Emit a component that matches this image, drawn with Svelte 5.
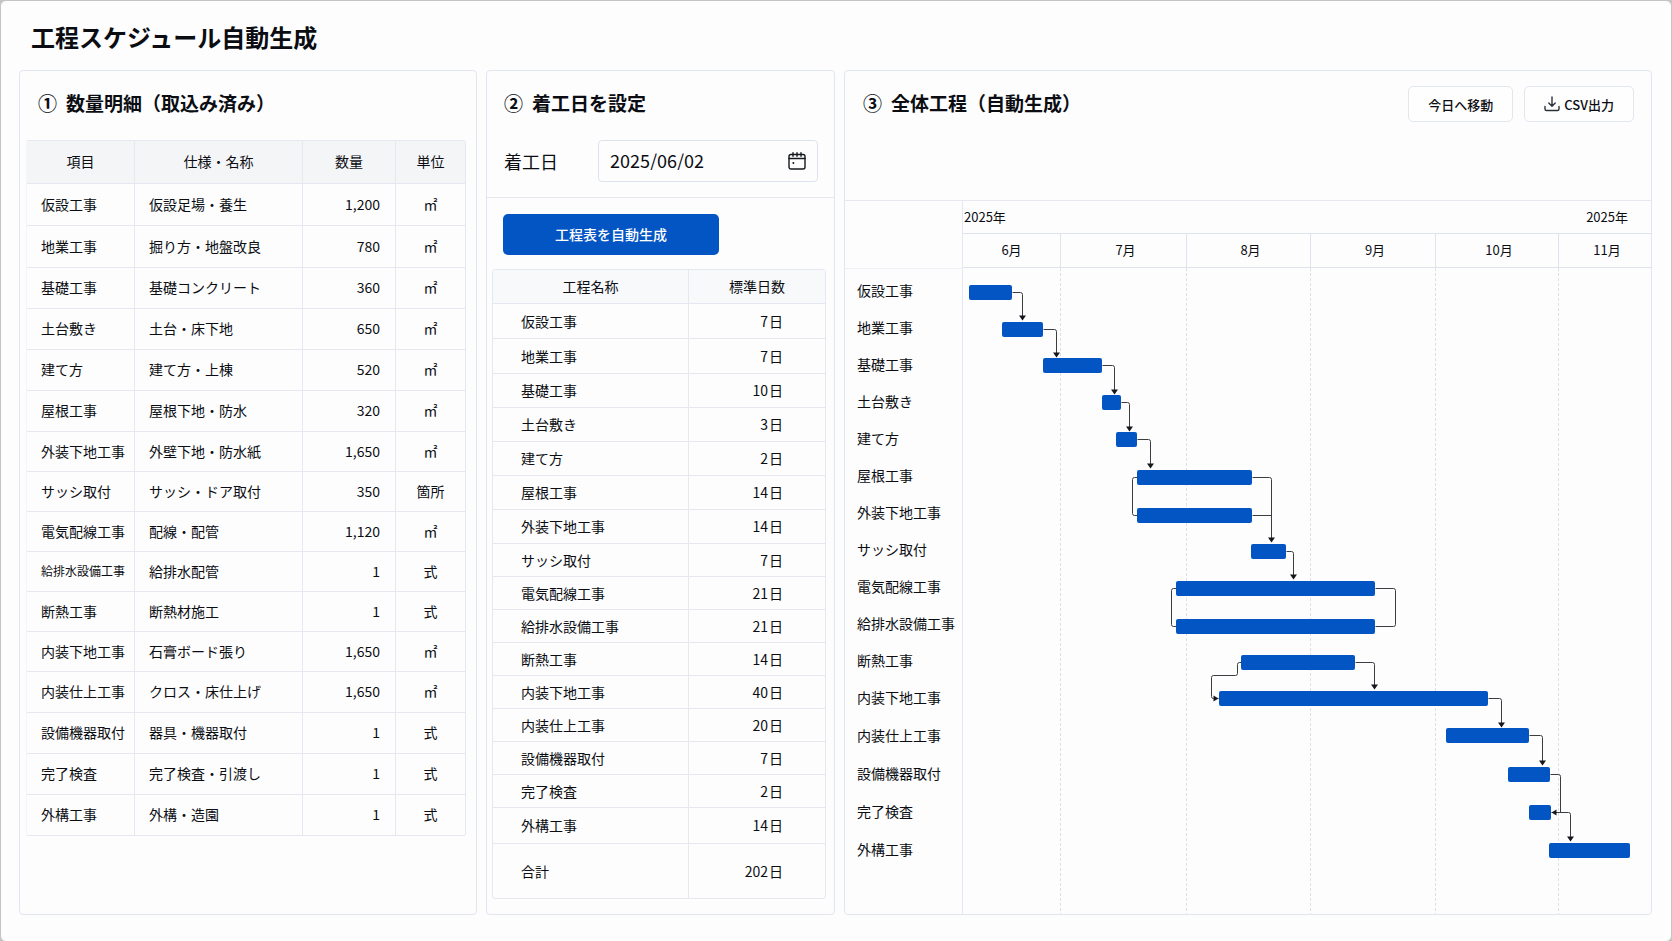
<script lang="ts">
	type Item = { name: string; spec: string; qty: string; unit: string };
	type Process = { name: string; days: number; start: number; end: number; y: number };
	type Link = { points: [number, number][]; arrow?: 'down' | 'left' | 'right' };

	const items: Item[] = [
		{ name: '仮設工事', spec: '仮設足場・養生', qty: '1,200', unit: '㎡' },
		{ name: '地業工事', spec: '掘り方・地盤改良', qty: '780', unit: '㎡' },
		{ name: '基礎工事', spec: '基礎コンクリート', qty: '360', unit: '㎡' },
		{ name: '土台敷き', spec: '土台・床下地', qty: '650', unit: '㎡' },
		{ name: '建て方', spec: '建て方・上棟', qty: '520', unit: '㎡' },
		{ name: '屋根工事', spec: '屋根下地・防水', qty: '320', unit: '㎡' },
		{ name: '外装下地工事', spec: '外壁下地・防水紙', qty: '1,650', unit: '㎡' },
		{ name: 'サッシ取付', spec: 'サッシ・ドア取付', qty: '350', unit: '箇所' },
		{ name: '電気配線工事', spec: '配線・配管', qty: '1,120', unit: '㎡' },
		{ name: '給排水設備工事', spec: '給排水配管', qty: '1', unit: '式' },
		{ name: '断熱工事', spec: '断熱材施工', qty: '1', unit: '式' },
		{ name: '内装下地工事', spec: '石膏ボード張り', qty: '1,650', unit: '㎡' },
		{ name: '内装仕上工事', spec: 'クロス・床仕上げ', qty: '1,650', unit: '㎡' },
		{ name: '設備機器取付', spec: '器具・機器取付', qty: '1', unit: '式' },
		{ name: '完了検査', spec: '完了検査・引渡し', qty: '1', unit: '式' },
		{ name: '外構工事', spec: '外構・造園', qty: '1', unit: '式' },
	];

	// start / end はチャート上の横座標 (0〜CHART_UNITS)、y はバー中心の縦座標
	const processes: Process[] = [
		{ name: '仮設工事', days: 7, start: 6, end: 49, y: 24 },
		{ name: '地業工事', days: 7, start: 39, end: 80, y: 61 },
		{ name: '基礎工事', days: 10, start: 80, end: 139, y: 97 },
		{ name: '土台敷き', days: 3, start: 139, end: 158, y: 134 },
		{ name: '建て方', days: 2, start: 153, end: 174, y: 171 },
		{ name: '屋根工事', days: 14, start: 174, end: 289, y: 209 },
		{ name: '外装下地工事', days: 14, start: 174, end: 289, y: 247 },
		{ name: 'サッシ取付', days: 7, start: 288, end: 323, y: 283 },
		{ name: '電気配線工事', days: 21, start: 213, end: 412, y: 320 },
		{ name: '給排水設備工事', days: 21, start: 213, end: 412, y: 358 },
		{ name: '断熱工事', days: 14, start: 278, end: 392, y: 394 },
		{ name: '内装下地工事', days: 40, start: 256, end: 525, y: 430 },
		{ name: '内装仕上工事', days: 20, start: 483, end: 566, y: 467 },
		{ name: '設備機器取付', days: 7, start: 545, end: 587, y: 506 },
		{ name: '完了検査', days: 2, start: 566, end: 588, y: 544 },
		{ name: '外構工事', days: 14, start: 586, end: 667, y: 582 },
	];
	const totalDays = 202;

	const links: Link[] = [
		{ points: [[49, 24], [59, 24], [59, 51]], arrow: 'down' },
		{ points: [[80, 61], [93, 61], [93, 88]], arrow: 'down' },
		{ points: [[139, 97], [151, 97], [151, 125]], arrow: 'down' },
		{ points: [[158, 134], [166, 134], [166, 162]], arrow: 'down' },
		{ points: [[174, 171], [187, 171], [187, 199]], arrow: 'down' },
		{ points: [[289, 209], [308, 209], [308, 273]], arrow: 'down' },
		{ points: [[289, 247], [308, 247]] },
		{ points: [[174, 209], [169, 209], [169, 247], [174, 247]] },
		{ points: [[323, 283], [330, 283], [330, 310]], arrow: 'down' },
		{ points: [[213, 320], [208, 320], [208, 358], [213, 358]] },
		{ points: [[412, 320], [432, 320], [432, 358], [412, 358]] },
		{ points: [[392, 394], [411, 394], [411, 420]], arrow: 'down' },
		{ points: [[278, 394], [274, 394], [274, 407], [248, 407], [248, 430], [255, 430]], arrow: 'right' },
		{ points: [[525, 430], [538, 430], [538, 458]], arrow: 'down' },
		{ points: [[566, 467], [579, 467], [579, 496]], arrow: 'down' },
		{ points: [[587, 506], [597, 506], [597, 544]] },
		{ points: [[598, 544], [588, 544]], arrow: 'left' },
		{ points: [[595, 544], [607, 544], [607, 572]], arrow: 'down' },
	];

	const months = ['6月', '7月', '8月', '9月', '10月', '11月'];
	const gridLines = [98, 224, 348, 473, 596];
	const CHART_UNITS = 688;
	const BAR_HEIGHT = 15;

	let startDate = $state('2025/06/02');
	let chartWidth = $state(688);

	const scale = $derived(chartWidth / CHART_UNITS);

	function linkPath(points: [number, number][], k: number): string {
		const pts = points.map(([x, y]) => [Math.round(x * k) + 0.5, y + 0.5]);
		let d = `M${pts[0][0]} ${pts[0][1]}`;
		for (let i = 1; i < pts.length; i++) {
			const [x, y] = pts[i];
			const next = pts[i + 1];
			if (!next) {
				d += `L${x} ${y}`;
				break;
			}
			const [px, py] = pts[i - 1];
			const r = 2;
			d += `L${x - Math.sign(x - px) * r} ${y - Math.sign(y - py) * r}`;
			d += `Q${x} ${y} ${x + Math.sign(next[0] - x) * r} ${y + Math.sign(next[1] - y) * r}`;
		}
		return d;
	}

	function arrowPath(link: Link, k: number): string {
		const [ux, uy] = link.points[link.points.length - 1];
		const x = Math.round(ux * k) + 0.5;
		const y = uy + 0.5;
		if (link.arrow === 'left') return `M${x} ${y}l5 -3v6z`;
		if (link.arrow === 'right') return `M${x} ${y}l-5 -3v6z`;
		return `M${x} ${y + 1}l-3.5 -5h7z`;
	}
</script>

<div class="page">
	<h1>工程スケジュール自動生成</h1>

	<main class="panels">
		<section class="panel items-panel">
			<h2><span class="step">①</span>数量明細（取込み済み）</h2>
			<table class="items">
				<thead>
					<tr>
						<th class="col-name">項目</th>
						<th class="col-spec">仕様・名称</th>
						<th class="col-qty">数量</th>
						<th class="col-unit">単位</th>
					</tr>
				</thead>
				<tbody>
					{#each items as item (item.name)}
						<tr>
							<td class:compact={item.name.length > 6}>{item.name}</td>
							<td>{item.spec}</td>
							<td class="num">{item.qty}</td>
							<td class="unit">{item.unit}</td>
						</tr>
					{/each}
				</tbody>
			</table>
		</section>

		<section class="panel date-panel">
			<div class="date-head">
				<h2><span class="step">②</span>着工日を設定</h2>
				<div class="date-row">
					<label for="start-date">着工日</label>
					<div class="date-box">
						<input id="start-date" type="text" bind:value={startDate} />
						<button type="button" class="icon-btn" aria-label="カレンダー">
							<svg width="18" height="18" viewBox="0 0 18 18" fill="none" stroke="#15181e" stroke-width="1.4" stroke-linecap="round">
								<rect x="1" y="2.5" width="16" height="14.5" rx="2" />
								<path d="M1 6.5h16M5 .8v3.4M9 .8v3.4M13 .8v3.4" />
								<circle cx="5.4" cy="11" r="1" fill="#15181e" stroke="none" />
							</svg>
						</button>
					</div>
				</div>
			</div>
			<button type="button" class="generate">工程表を自動生成</button>
			<div class="days-wrap">
				<table class="days">
					<thead>
						<tr>
							<th class="col-process">工程名称</th>
							<th>標準日数</th>
						</tr>
					</thead>
					<tbody>
						{#each processes as p (p.name)}
							<tr>
								<td>{p.name}</td>
								<td class="num">{p.days}<span class="day">日</span></td>
							</tr>
						{/each}
					</tbody>
					<tfoot>
						<tr>
							<td>合計</td>
							<td class="num">{totalDays}<span class="day">日</span></td>
						</tr>
					</tfoot>
				</table>
			</div>
		</section>

		<section class="panel gantt-panel">
			<header class="gantt-head">
				<h2><span class="step">③</span>全体工程（自動生成）</h2>
				<div class="actions">
					<button type="button" class="ghost">今日へ移動</button>
					<button type="button" class="ghost">
						<svg width="16" height="16" viewBox="0 0 16 16" fill="none" stroke="#2b3038" stroke-width="1.4" stroke-linecap="round" stroke-linejoin="round">
							<path d="M8 1v9M4.8 7L8 10.2 11.2 7" />
							<path d="M1 10.5V13q0 1.5 1.5 1.5h11q1.5 0 1.5-1.5v-2.5" />
						</svg>
						CSV出力
					</button>
				</div>
			</header>

			<div class="gantt">
				<div class="labels">
					<div class="labels-head"></div>
					<ul>
						{#each processes as p (p.name)}
							<li>{p.name}</li>
						{/each}
					</ul>
				</div>
				<div class="timeline">
					<div class="years"><span>2025年</span><span>2025年</span></div>
					<div class="months">
						{#each months as m (m)}
							<span>{m}</span>
						{/each}
					</div>
					<div class="chart" bind:clientWidth={chartWidth}>
						<svg role="img" aria-label="全体工程">
							{#each gridLines as g (g)}
								<line class="grid" x1={Math.round(g * scale) - 0.5} x2={Math.round(g * scale) - 0.5} y1="0" y2="100%" />
							{/each}
							{#each links as link}
								<path class="link" d={linkPath(link.points, scale)} />
								{#if link.arrow}
									<path class="arrow" d={arrowPath(link, scale)} />
								{/if}
							{/each}
							{#each processes as p (p.name)}
								<rect
									class="bar"
									x={Math.round(p.start * scale)}
									y={p.y - 7}
									width={Math.round((p.end - p.start) * scale)}
									height={BAR_HEIGHT}
									rx="2"
								/>
							{/each}
						</svg>
					</div>
				</div>
			</div>
		</section>
	</main>
</div>

<style>
	:global(body) {
		background: #c4c4c4;
	}
	.page {
		box-sizing: border-box;
		min-height: 100vh;
		display: flex;
		flex-direction: column;
		padding: 0 19px 26px 18px;
		border: 1px solid #c4c4c4;
		border-radius: 6px;
		background: #fdfdfe;
		color: #0b0d12;
		font-family: 'Noto Sans CJK JP', 'Noto Sans', sans-serif;
		font-size: 14px;
		line-height: 20px;
	}
	h1 {
		margin: 18px 0 15px 12px;
		font-size: 24px;
		line-height: 36px;
		font-weight: 600;
	}
	h2 {
		margin: 0;
		display: flex;
		align-items: center;
		gap: 9px;
		font-size: 19px;
		line-height: 28px;
		font-weight: 600;
		white-space: nowrap;
	}
	.panels {
		flex: 1;
		display: grid;
		grid-template-columns: 458fr 349fr 808fr;
		gap: 9px;
	}
	.panel {
		box-sizing: border-box;
		min-width: 0;
		border: 1px solid #e2e6ee;
		border-radius: 4px;
	}
	button {
		font-family: inherit;
		cursor: pointer;
	}

	/* ① */
	.items-panel {
		padding: 18px 10px 0 6px;
	}
	.items-panel h2 {
		margin: 0 0 23px 12px;
	}
	table {
		width: 100%;
		table-layout: fixed;
		border-collapse: separate;
		border-spacing: 0;
		border: 1px solid #e5e8f0;
		border-radius: 3px;
	}
	th,
	td {
		box-sizing: border-box;
		padding: 0 0 2px;
		border-right: 1px solid #e5e8f0;
		border-bottom: 1px solid #e5e8f0;
		white-space: nowrap;
	}
	th:last-child,
	td:last-child {
		border-right: none;
	}
	th {
		background: #f4f5f7;
		font-weight: 400;
		text-align: center;
	}
	td {
		text-align: left;
	}
	td.num {
		text-align: right;
	}
	.items {
		border-left-color: #f3f5f9;
		border-bottom: none;
	}
	.items thead tr {
		height: 43px;
	}
	.items tbody tr {
		height: 41px;
	}
	.items tbody tr:nth-child(-n + 2) {
		height: 42px;
	}
	.items tbody tr:nth-child(n + 7):nth-child(-n + 12) {
		height: 40px;
	}
	.items td {
		padding-left: 14px;
	}
	.items td.num {
		padding: 0 15px 2px 0;
	}
	.items td.unit {
		padding: 0 0 2px;
		text-align: center;
	}
	.items td.compact {
		font-size: 12px;
	}
	.col-name { width: 108px; }
	.col-qty { width: 93px; }
	.col-unit { width: 69px; }

	/* ② */
	.date-panel {
		display: flex;
		flex-direction: column;
	}
	.date-head {
		padding: 18px 16px 15px 17px;
		border-bottom: 1px solid #e5e8f0;
	}
	.date-row {
		display: flex;
		align-items: center;
		justify-content: space-between;
		margin-top: 23px;
	}
	.date-row label {
		font-size: 18px;
	}
	.date-box {
		box-sizing: border-box;
		width: 220px;
		height: 42px;
		display: flex;
		align-items: center;
		padding: 0 11px;
		border: 1px solid #dde3ee;
		border-radius: 4px;
	}
	.date-box input {
		flex: 1;
		min-width: 0;
		padding: 0 0 2px;
		border: none;
		outline: none;
		background: transparent;
		color: inherit;
		font: inherit;
		font-size: 18px;
	}
	.icon-btn {
		display: flex;
		padding: 0;
		border: none;
		background: none;
	}
	.generate {
		align-self: flex-start;
		width: 216px;
		height: 41px;
		margin: 16px 16px 14px;
		padding: 0 0 2px;
		border: none;
		border-radius: 5px;
		background: #0455c4;
		color: #fff;
		font-size: 14px;
		font-weight: 500;
	}
	.days-wrap {
		padding: 0 8px 15px 5px;
	}
	.days th {
		background: #f8f9fb;
	}
	.days thead tr {
		height: 34px;
	}
	.days tbody tr {
		height: 33px;
	}
	.days tbody tr:nth-child(-n + 7) {
		height: 34px;
	}
	.days tbody tr:nth-child(-n + 2) {
		height: 35px;
	}
	.days tbody tr:last-child {
		height: 36px;
	}
	.days tfoot tr {
		height: 54px;
	}
	.days tfoot td {
		border-bottom: none;
	}
	.days td {
		padding: 0 0 1px 28px;
	}
	.days td.num {
		padding: 0 42px 1px 0;
	}
	.day {
		margin-left: 1px;
	}
	.col-process { width: 196px; }

	/* ③ */
	.gantt-panel {
		display: flex;
		flex-direction: column;
	}
	.gantt-head {
		box-sizing: border-box;
		min-height: 130px;
		display: flex;
		align-items: flex-start;
		justify-content: space-between;
		padding: 15px 17px 0 18px;
		border-bottom: 1px solid #e5e8f0;
	}
	.gantt-head h2 {
		margin-top: 3px;
	}
	.actions {
		display: flex;
		gap: 11px;
	}
	.ghost {
		height: 36px;
		display: flex;
		align-items: center;
		gap: 4px;
		padding: 0 19px;
		border: 1px solid #e2e6ee;
		border-radius: 5px;
		background: #fefefe;
		color: #0b0d12;
		font-size: 13px;
		font-weight: 500;
	}
	.gantt {
		flex: 1;
		display: flex;
	}
	.labels {
		box-sizing: border-box;
		width: 118px;
		border-right: 1px solid #e5e8f0;
	}
	.labels-head {
		height: 67px;
		border-bottom: 1px solid #edf0f5;
	}
	.labels ul {
		margin: 0;
		padding: 3px 0 0 12px;
		list-style: none;
	}
	.labels li {
		line-height: 37px;
		white-space: nowrap;
	}
	.labels li:nth-child(n + 13) {
		line-height: 38px;
	}
	.timeline {
		flex: 1;
		min-width: 0;
		display: flex;
		flex-direction: column;
		font-size: 13px;
	}
	.years {
		display: flex;
		justify-content: space-between;
		padding: 6px 23px 6px 1px;
	}
	.months {
		display: grid;
		grid-template-columns: 98fr 126fr 124fr 125fr 123fr 92fr;
		border-top: 1px solid #dfe4ec;
		border-bottom: 1px solid #dfe4ec;
	}
	.months span {
		padding-bottom: 1px;
		line-height: 32px;
		text-align: center;
		border-right: 1px solid #dfe4ec;
	}
	.months span:nth-child(n + 2) {
		padding-left: 4px;
	}
	.months span:last-child {
		border-right: none;
	}
	.chart {
		flex: 1;
		display: flex;
	}
	.chart svg {
		flex: 1;
		min-width: 0;
		min-height: 620px;
	}
	.grid {
		stroke: #dcdfe5;
		stroke-dasharray: 3 2;
	}
	.link {
		fill: none;
		stroke: #3a3d42;
	}
	.arrow {
		fill: #15171b;
	}
	.bar {
		fill: #0455c4;
	}
</style>
